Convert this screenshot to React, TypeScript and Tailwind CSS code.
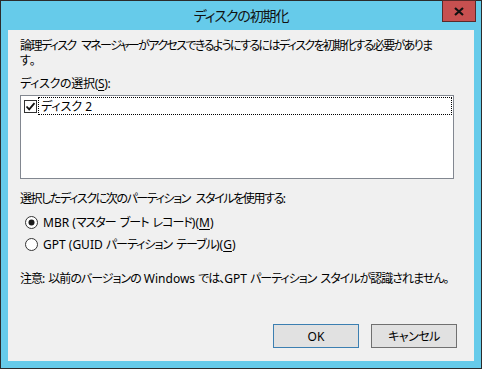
import React from "react";

const font = {
  fontFamily: '"Noto Sans", "Noto Sans CJK JP", sans-serif',
};

function U({ children }: { children: React.ReactNode }) {
  return <span className="underline underline-offset-2">{children}</span>;
}

function J({ children }: { children: React.ReactNode }) {
  return <span className="tracking-[-1px] [word-spacing:2px]">{children}</span>;
}

function Radio({ checked }: { checked?: boolean }) {
  return (
    <svg width="13" height="13" viewBox="0 0 13 13" className="shrink-0">
      <circle cx="6.5" cy="6.5" r="6" fill="#fff" stroke="#333" strokeWidth="1" />
      {checked && <circle cx="6.5" cy="6.5" r="3" fill="#1a1a1a" />}
    </svg>
  );
}

export default function App() {
  return (
    <div
      className="w-[482px] h-[369px] bg-[#66cbea] border border-[#2b2b2b] flex flex-col text-[12px] text-black [font-feature-settings:'palt']"
      style={font}
    >
      <div className="relative h-[29px] flex items-center justify-center shrink-0">
        <span className="text-[14px] leading-none text-[#111] mt-[1px] tracking-[-1.1px]">ディスクの初期化</span>
        <div className="absolute right-[5px] top-[-1px] w-[34px] h-[22px] bg-[#c75050] border border-[#5a2a2a] flex items-center justify-center">
          <svg width="10" height="9" viewBox="0 0 10 9">
            <path d="M1 1 L9 8 M9 1 L1 8" stroke="#111" strokeWidth="2.2" />
          </svg>
        </div>
      </div>
      <div className="mx-[7px] h-[331px] bg-[#f0f0f0] flex flex-col px-[12px] pt-[8px] pb-[13px] leading-[15px]">
        <div className="whitespace-nowrap tracking-[-1.6px] [word-spacing:4px]">
          論理ディスク マネージャーがアクセスできるようにするにはディスクを初期化する必要がありま
        </div>
        <div className="whitespace-nowrap">す。</div>
        <div className="mt-[8px] tracking-[-0.3px]">
          ディスクの選択(<U>S</U>):
        </div>
        <div className="mt-[4px] h-[84px] w-[434px] bg-white border border-[#828790] p-[1px]">
          <div className="flex items-center h-[18px]">
            <div className="w-[13px] h-[13px] border border-[#333] bg-white flex items-center justify-center ml-[2px] shrink-0">
              <svg width="11" height="11" viewBox="0 0 11 11">
                <path d="M1.5 5.5 L4.2 8.3 L9.5 2.2" stroke="#111" strokeWidth="1.8" fill="none" />
              </svg>
            </div>
            <div className="flex-1 h-[18px] ml-[1px] border border-dotted border-black flex items-center pl-[2px]">
              ディスク 2
            </div>
          </div>
        </div>
        <div className="mt-[12px] whitespace-nowrap tracking-[-1.4px] [word-spacing:4px]">
          選択したディスクに次のパーティション スタイルを使用する:
        </div>
        <div className="mt-[9px] flex items-center gap-[5px] pl-[5px] whitespace-nowrap">
          <Radio checked />
          <span>
            MBR (<J>マスター ブート レコード</J>)(<U>M</U>)
          </span>
        </div>
        <div className="mt-[7px] flex items-center gap-[5px] pl-[5px] whitespace-nowrap">
          <Radio />
          <span>
            GPT (GUID <J>パーティション テーブル</J>)(<U>G</U>)
          </span>
        </div>
        <div className="mt-[19px] whitespace-nowrap">
          <J>注意</J>: <J>以前のバージョンの</J> Windows <J>では、</J>GPT <J>パーティション スタイルが認識されません。</J>
        </div>
        <div className="mt-auto flex justify-end gap-[12px] pr-[5px]">
          <button className="w-[86px] h-[24px] bg-[#e1e1e1] border border-[#3c7fb1] text-[12px]">OK</button>
          <button className="w-[86px] h-[24px] bg-[#e1e1e1] border border-[#707070] text-[12px] tracking-[-0.5px]">キャンセル</button>
        </div>
      </div>
    </div>
  );
}
